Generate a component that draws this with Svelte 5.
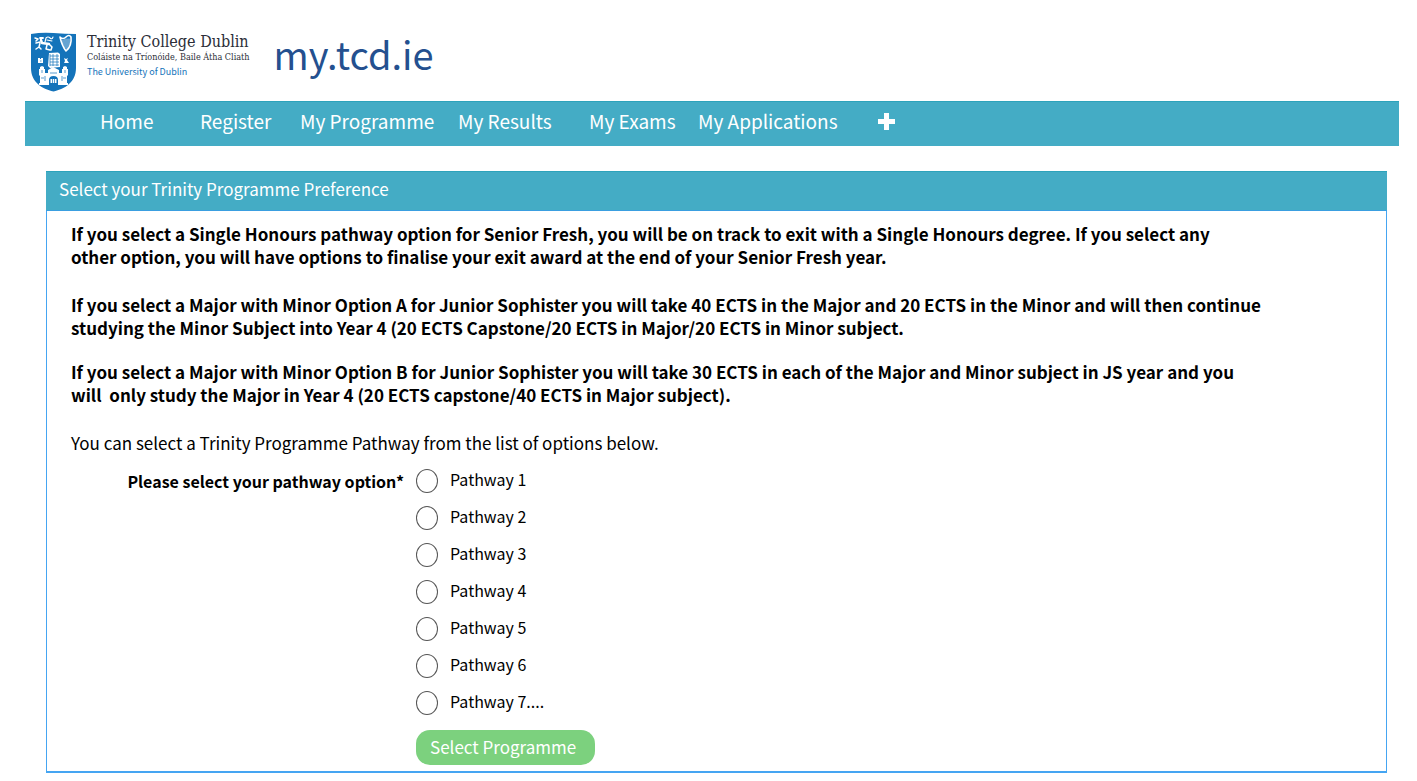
<script>
  const links = ['Home', 'Register', 'My Programme', 'My Results', 'My Exams', 'My Applications'];
  const pathways = ['Pathway 1', 'Pathway 2', 'Pathway 3', 'Pathway 4', 'Pathway 5', 'Pathway 6', 'Pathway 7....'];
  let selected = $state('');
</script>

<div class="page">
  <header class="masthead">
    <a class="brand" href="#home">
      <svg class="shield" viewBox="0 0 46 60" aria-hidden="true">
        <path fill="#1473ba" d="M1 2Q12 0 23.5 1T46 2V36C46 50 35 57 23.5 59.5C12 57 1 50 1 36Z" />
        <g fill="none" stroke="#fff" stroke-linecap="round" stroke-linejoin="round">
          <path stroke-width="1.5" d="M5 6L8 7L6 9M6 11L10 10M6 17L9 15L11 17M10 11L9 15M17 13L16 17L20 18M19 12L22 15L21 18" />
          <path stroke-width="2.4" d="M11 8L12 11L19 12" />
          <path stroke-width="1.8" d="M10 6L13 6" />
          <path stroke-width="1.1" d="M15 10L16 6Q18 4 20 6T23 5M17 8L22 9" />
          <path stroke-width="1.6" d="M30 5Q33 8 36 5T41 5Q42 14 36 19Q32 14 30 5" />
          <path stroke-width="0.7" d="M33 8V13M35 7V16M37 7V17M39 7V14" />
        </g>
        <g fill="#fff">
          <path d="M19 21L28 20.5L30 22V35L20 36L18 34Z" />
          <path d="M8 26H10V27H11V26H13V31H8ZM34 26L36 27L38 26L37 28L39 31H36L34 31L35 29Z" />
          <path d="M10 51V44L9 43V37H10V35L12 34L14 35V37H15V41H18V38L23 35L29 38V41H32V37H33V35L35 34L37 35V37H38V43L37 44V51H28V48Q28 44 23.5 44T19 48V51Z" />
          <path d="M9 51H19V53H9ZM28 51H38V53H28ZM20.5 47H26.5V51H20.5Z" />
        </g>
        <g fill="none" stroke="#1473ba" stroke-width="0.7">
          <path d="M20 22V34M20 24H29M20 27H29M20 30H29M20 33H29M23 22V34M27 22V34" />
          <path d="M12 38V41M35 38V41M15 44V49M32 44V49M11 46H14M33 46H36M20 41H27M22.5 47V51M24.5 47V51M10 29H11.5" />
        </g>
      </svg>
      <span class="names">
        <span class="college">Trinity College Dublin</span>
        <span class="irish">Coláiste na Tríonóide, Baile Átha Cliath</span>
        <span class="university">The University of Dublin</span>
      </span>
    </a>
    <span class="site">my.tcd.ie</span>
  </header>

  <nav aria-label="Main">
    {#each links as link}
      <a href="#{link.toLowerCase().replace(' ', '-')}">{link}</a>
    {/each}
    <button class="more" type="button" aria-label="More">
      <svg viewBox="0 0 17 17" aria-hidden="true"><path fill="#fff" d="M6 0H11V6H17V11H11V17H6V11H0V6H6Z" /></svg>
    </button>
  </nav>

  <main>
    <h1>Select your Trinity Programme Preference</h1>
    <form onsubmit={(e) => e.preventDefault()}>
      <p class="note">If you select a Single Honours pathway option for Senior Fresh, you will be on track to exit with a Single Honours degree. If you select any<br />other option, you will have options to finalise your exit award at the end of your Senior Fresh year.</p>
      <p class="note minor">If you select a Major with Minor Option A for Junior Sophister you will take 40 ECTS in the Major and 20 ECTS in the Minor and will then continue<br />studying the Minor Subject into Year 4 (20 ECTS Capstone/20 ECTS in Major/20 ECTS in Minor subject.</p>
      <p class="note">If you select a Major with Minor Option B for Junior Sophister you will take 30 ECTS in each of the Major and Minor subject in JS year and you<br />will&nbsp; only study the Major in Year 4 (20 ECTS capstone/40 ECTS in Major subject).</p>
      <p class="intro">You can select a Trinity Programme Pathway from the list of options below.</p>
      <div class="choice" role="radiogroup" aria-labelledby="pathway-label">
        <span class="prompt" id="pathway-label">Please select your pathway option*</span>
        <div class="options">
          {#each pathways as pathway}
            <label><input type="radio" name="pathway" value={pathway} bind:group={selected} /><span>{pathway}</span></label>
          {/each}
          <button class="submit" type="submit">Select Programme</button>
        </div>
      </div>
    </form>
  </main>
</div>

<style>
  :global(body) {
    margin: 0;
    background: #fff;
  }
  .page {
    padding: 32px 18px 8px 25px;
    font-family: 'Noto Sans CJK SC', 'Noto Sans', sans-serif;
    font-size: 17px;
    line-height: 23px;
    color: #000;
  }
  .masthead {
    display: flex;
    align-items: flex-start;
    gap: 24px;
    height: 69px;
    padding-left: 5px;
  }
  .brand {
    display: flex;
    gap: 11px;
    text-decoration: none;
    white-space: nowrap;
  }
  .shield {
    width: 46px;
    height: 60px;
  }
  .names {
    display: flex;
    flex-direction: column;
  }
  .college {
    font: 16px/19px 'DejaVu Serif Condensed', 'Liberation Serif', serif;
    color: #2b2e38;
  }
  .irish {
    font: 9px/13px 'DejaVu Serif Condensed', 'Liberation Serif', serif;
    color: #2b2e38;
  }
  .university {
    font-size: 9px;
    line-height: 15px;
    color: #1473ba;
  }
  .site {
    font-size: 38px;
    line-height: 44px;
    color: #24508f;
  }
  nav {
    display: grid;
    grid-template-columns: 100px 100px 158px 131px 109px 180px 18px;
    align-items: center;
    padding: 0 75px;
    height: 45px;
    box-sizing: border-box;
    background: #44acc5;
    border-top: 1px solid #2da3bb;
  }
  nav a {
    font-size: 19px;
    line-height: 28px;
    padding-bottom: 7px;
    color: #fff;
    text-decoration: none;
    white-space: nowrap;
  }
  .more {
    display: flex;
    padding: 0 0 6px;
    border: 0;
    background: none;
  }
  .more svg {
    width: 17px;
    height: 17px;
  }
  main {
    margin: 25px 12px 0 21px;
    border: 1px solid #45a5f2;
    border-top: 0;
    border-bottom-width: 2px;
  }
  h1 {
    margin: 0 -1px;
    padding: 3px 13px 7px;
    border-top: 1px solid #2da3bb;
    border-bottom: 1px solid #3a9fe0;
    background: #44acc5;
    color: #fff;
    font-size: 17px;
    line-height: 28px;
    font-weight: 400;
  }
  form {
    padding: 11px 24px 6px;
  }
  p {
    margin: 0 0 25px;
  }
  .note {
    font-weight: 700;
  }
  .minor {
    margin-bottom: 21px;
  }
  .intro {
    margin-bottom: 15px;
  }
  .choice {
    display: flex;
    gap: 12px;
  }
  .prompt {
    width: 333px;
    text-align: right;
    font-size: 16px;
    line-height: 24px;
    font-weight: 700;
  }
  .options {
    display: flex;
    flex-direction: column;
    align-items: flex-start;
    gap: 13px;
  }
  label {
    display: flex;
    align-items: center;
    gap: 12px;
    font-size: 16px;
    line-height: 20px;
  }
  label span {
    padding-bottom: 4px;
  }
  input {
    appearance: none;
    width: 22px;
    height: 24px;
    margin: 0;
    border: 1px solid #555;
    border-radius: 50%;
    background: #fff;
  }
  input:checked {
    background: radial-gradient(#333 0 5px, #fff 6px);
  }
  .submit {
    margin-top: 2px;
    padding: 3px 19px 4px 14px;
    border: 0;
    border-radius: 14px;
    background: #7cd17e;
    color: #fff;
    font-family: inherit;
    font-size: 17px;
    line-height: 28px;
  }
</style>
